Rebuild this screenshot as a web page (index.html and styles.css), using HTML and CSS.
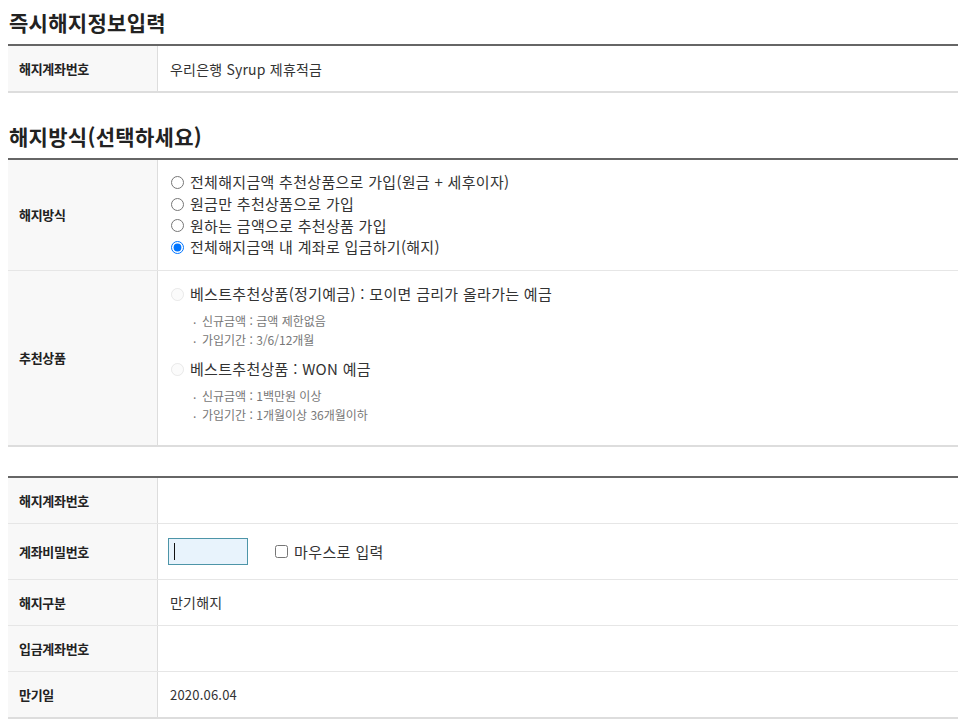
FILE: index.html
```html
<!DOCTYPE html>
<html lang="ko">
<head>
<meta charset="utf-8">
<title>즉시해지정보입력</title>
<link rel="stylesheet" href="styles.css">
</head>
<body>
<h2 class="sec-title first">즉시해지정보입력</h2>
<table class="info">
  <tr class="last">
    <th>해지계좌번호</th>
    <td>우리은행 Syrup 제휴적금</td>
  </tr>
</table>

<h2 class="sec-title">해지방식(선택하세요)</h2>
<table class="info">
  <tr>
    <th>해지방식</th>
    <td class="methods">
      <label class="radio"><input type="radio" name="m"> 전체해지금액 추천상품으로 가입(원금 + 세후이자)</label>
      <label class="radio"><input type="radio" name="m"> 원금만 추천상품으로 가입</label>
      <label class="radio"><input type="radio" name="m"> 원하는 금액으로 추천상품 가입</label>
      <label class="radio"><input type="radio" name="m" checked> 전체해지금액 내 계좌로 입금하기(해지)</label>
    </td>
  </tr>
  <tr class="last">
    <th>추천상품</th>
    <td class="products">
      <label class="radio prod"><input type="radio" name="p" disabled> 베스트추천상품(정기예금) : 모이면 금리가 올라가는 예금</label>
      <ul class="desc">
        <li>신규금액 : 금액 제한없음</li>
        <li>가입기간 : 3/6/12개월</li>
      </ul>
      <label class="radio prod"><input type="radio" name="p" disabled> 베스트추천상품 : WON 예금</label>
      <ul class="desc">
        <li>신규금액 : 1백만원 이상</li>
        <li>가입기간 : 1개월이상 36개월이하</li>
      </ul>
    </td>
  </tr>
</table>

<table class="info third">
  <tr>
    <th>해지계좌번호</th>
    <td></td>
  </tr>
  <tr class="pw">
    <th>계좌비밀번호</th>
    <td>
      <div class="pw-line">
        <span class="pw-wrap"><input type="password" class="pw-input"><span class="caret"></span></span>
        <label class="check"><input type="checkbox"> 마우스로 입력</label>
      </div>
    </td>
  </tr>
  <tr>
    <th>해지구분</th>
    <td>만기해지</td>
  </tr>
  <tr>
    <th>입금계좌번호</th>
    <td></td>
  </tr>
  <tr class="last">
    <th>만기일</th>
    <td class="date">2020.06.04</td>
  </tr>
</table>
</body>
</html>
```
FILE: styles.css
```css
html, body {
  background: #fff;
}
body {
  margin: 8px 14px 8px 8px;
  font-family: "Noto Sans CJK KR", "Noto Sans", sans-serif;
  color: #333;
}
.sec-title {
  margin: 0;
  padding: 0 0 0 1px;
  font-size: 21px;
  line-height: 28px;
  font-weight: bold;
  color: #222;
  letter-spacing: 0.3px;
  height: 36px;
}
.info {
  width: 950px;
  border-collapse: collapse;
  border-top: 2px solid #666;
  margin-bottom: 29px;
}
.info th {
  width: 138px;
  background: #f8f8f8;
  text-align: left;
  font-size: 13px;
  font-weight: bold;
  color: #222;
  padding: 0 0 0 11px;
  border-right: 1px solid #ddd;
  border-bottom: 1px solid #e6e6e6;
  height: 45px;
  letter-spacing: -0.3px;
}
.info td {
  font-size: 14px;
  padding: 0 0 0 12px;
  border-bottom: 1px solid #e6e6e6;
  color: #333;
  height: 45px;
  letter-spacing: 0.2px;
}
.info tr.last th,
.info tr.last td {
  border-bottom: 2px solid #ddd;
}
.methods {
  padding-top: 11px !important;
  padding-bottom: 12px !important;
}
.radio {
  display: flex;
  align-items: center;
  height: 21.7px;
  line-height: 21px;
  white-space: nowrap;
  font-size: 15px;
  letter-spacing: 0.3px;
}
.radio input {
  margin: 1px 6px 0 1px;
  width: 13px;
  height: 13px;
}
.products {
  padding-top: 11px !important;
  padding-bottom: 13px !important;
}
.prod {
  height: 24px;
}
.prod input {
  opacity: 0.45;
}
.desc {
  list-style: none;
  margin: 5px 0 8px 0;
  padding: 0 0 0 32px;
  font-size: 12px;
  color: #777;
  letter-spacing: 0;
}
.desc li {
  line-height: 19px;
  position: relative;
}
.desc li::before {
  content: ".";
  position: absolute;
  left: -9px;
  top: -2px;
}
.pw th, .pw td {
  height: 55px;
}
.pw-line {
  display: flex;
  align-items: center;
  gap: 27px;
}
.pw-wrap {
  position: relative;
  display: inline-block;
  margin-left: -2px;
  height: 27px;
}
.pw-input {
  display: block;
  width: 80px;
  height: 27px;
  box-sizing: border-box;
  margin: 0;
  border: 1px solid #4d95a8;
  background: #e8f3fc;
  outline: none;
  padding: 0 4px;
  caret-color: transparent;
}
.caret {
  position: absolute;
  left: 6px;
  top: 5px;
  width: 1px;
  height: 17px;
  background: #111;
}
.check {
  display: flex;
  align-items: center;
  font-size: 15px;
  letter-spacing: 0.4px;
}
.check input {
  margin: 1px 6px 0 0;
  width: 13px;
  height: 13px;
}
.date {
  font-size: 13px !important;
}
```
